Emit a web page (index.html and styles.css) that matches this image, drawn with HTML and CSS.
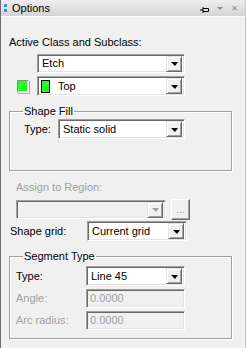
FILE: index.html
```html
<!DOCTYPE html>
<html lang="en">
<head>
    <meta charset="UTF-8">
    <title>Options</title>
    <link rel="stylesheet" href="styles.css">
</head>
<body>
    <div class="panel">

        <div class="titlebar">
            <span class="grip"></span>
            <span class="title">Options</span>
            <span class="tools">
                <svg class="pin" width="9" height="6" viewBox="0 0 9 6"><path d="M0 3H3M3 0V6M3 1.5H8.5V4.5H3" fill="none" stroke="#000" stroke-width="1"/></svg>
                <span class="menu-arrow"></span>
                <span class="close">✕</span>
            </span>
        </div>

        <div class="content">
            <div class="label">Active Class and Subclass:</div>

            <div class="class-rows">
                <div class="combo combo-class">
                    <span class="value">Etch</span>
                    <span class="drop"><i></i></span>
                </div>
                <div class="subclass-row">
                    <span class="swatch-btn"><span></span></span>
                    <div class="combo combo-class">
                        <span class="value"><span class="chip"></span>Top</span>
                        <span class="drop"><i></i></span>
                    </div>
                </div>
            </div>

            <fieldset class="group fill-group">
                <legend>Shape Fill</legend>
                <div class="field fill-field">
                    <span>Type:</span>
                    <div class="combo">
                        <span class="value">Static solid</span>
                        <span class="drop"><i></i></span>
                    </div>
                </div>
            </fieldset>

            <div class="label disabled region-label">Assign to Region:</div>
            <div class="region-row">
                <div class="combo combo-off">
                    <span class="value"></span>
                    <span class="drop"><i></i></span>
                </div>
                <span class="dots">...</span>
            </div>

            <div class="field grid-field">
                <span>Shape grid:</span>
                <div class="combo">
                    <span class="value">Current grid</span>
                    <span class="drop"><i></i></span>
                </div>
            </div>

            <fieldset class="group segment-group">
                <legend>Segment Type</legend>
                <div class="field">
                    <span>Type:</span>
                    <div class="combo">
                        <span class="value">Line 45</span>
                        <span class="drop"><i></i></span>
                    </div>
                </div>
                <div class="field">
                    <span class="disabled">Angle:</span>
                    <div class="textbox">0.0000</div>
                </div>
                <div class="field">
                    <span class="disabled">Arc radius:</span>
                    <div class="textbox">0.0000</div>
                </div>
            </fieldset>
        </div>

    </div>
</body>
</html>
```

FILE: styles.css
```css
:root {
    --face: #f0f0f0;
    --shadow: #a0a0a0;
    --dark: #696969;
    --light: #e3e3e3;
    --gray-text: #a0a0a0;
    --green: #22ff22;
}

body {
    margin: 0;
    font-family: "Liberation Sans", Arial, sans-serif;
    font-size: 11px;
    line-height: 13px;
    color: #000;
    background-color: var(--face);
}

.panel {
    width: 246px;
    height: 348px;
    box-sizing: border-box;
    border-left: 1px solid #6d6d6d;
    border-right: 1px solid #c8c8c8;
    background-color: var(--face);
    overflow: hidden;
}

/* title bar */
.titlebar {
    height: 16px;
    display: flex;
    align-items: center;
    background: linear-gradient(#eeeeee, #d4d4d4);
    border-bottom: 1px solid #f8f8f8;
}

.grip {
    width: 3px;
    height: 8px;
    margin: 0 5px 0 3px;
    background: linear-gradient(#3d8ef0 0 3px, transparent 3px 5px, #3d8ef0 5px);
}

.title {
    flex: 1;
    font-size: 11px;
}

.tools {
    display: flex;
    align-items: center;
    gap: 8px;
    margin-right: 7px;
}

.pin {
    margin-top: 3px;
}

.menu-arrow {
    width: 0;
    height: 0;
    border-left: 3px solid transparent;
    border-right: 3px solid transparent;
    border-top: 3px solid #8a8a8a;
}

.close {
    color: #8a8a8a;
    font-size: 8px;
    font-weight: bold;
    font-family: "DejaVu Sans", sans-serif;
}

/* body */
.content {
    padding: 19px 0 0 8px;
}

.label {
    height: 13px;
}

.disabled {
    color: var(--gray-text);
}

/* sunken controls */
.combo,
.textbox {
    height: 20px;
    box-sizing: border-box;
    border: 1px solid;
    border-color: var(--shadow) #fff #fff var(--shadow);
    box-shadow: inset 1px 1px var(--dark), inset -1px -1px var(--light);
    background-color: #fff;
    display: flex;
    align-items: center;
    padding: 2px;
}

.combo .value {
    flex: 1;
    display: flex;
    align-items: center;
    padding-left: 2px;
    white-space: nowrap;
}

.drop {
    width: 16px;
    height: 16px;
    box-sizing: border-box;
    border: 1px solid;
    border-color: var(--light) var(--dark) var(--dark) var(--light);
    box-shadow: inset 1px 1px #fff, inset -1px -1px var(--shadow);
    background-color: var(--face);
    display: flex;
    align-items: center;
    justify-content: center;
}

.drop i {
    width: 0;
    height: 0;
    border-left: 4px solid transparent;
    border-right: 3px solid transparent;
    border-top: 4px solid #000;
    margin-top: 1px;
}

.combo-off {
    background-color: var(--face);
}

.combo-off .drop i {
    border-top-color: var(--gray-text);
}

.textbox {
    background-color: var(--face);
    color: var(--gray-text);
    padding-left: 3px;
}

/* class / subclass */
.class-rows {
    margin: 5px 0 0 28px;
    display: flex;
    flex-direction: column;
    gap: 3px;
}

.combo-class {
    width: 148px;
}

.class-rows > .combo-class {
    height: 19px;
}

.subclass-row {
    display: flex;
    align-items: center;
    margin-left: -20px;
    gap: 8px;
}

.swatch-btn {
    width: 12px;
    height: 13px;
    box-sizing: border-box;
    border: 1px solid;
    border-color: #8a8a8a #fff #fff #8a8a8a;
    box-shadow: 1px 1px #a8a8a8;
    display: flex;
}

.swatch-btn span {
    flex: 1;
    background-color: var(--green);
    border-right: 1px solid #fff;
    border-bottom: 1px solid #fff;
}

.chip {
    width: 9px;
    height: 13px;
    box-sizing: border-box;
    border: 1px solid #000;
    background-color: var(--green);
    margin: 0 8px 0 -1px;
}

/* group boxes */
.group {
    width: 223px;
    box-sizing: border-box;
    margin: 0;
    padding: 0 0 0 6px;
    border: 1px solid var(--shadow);
    box-shadow: inset 1px 1px #fff, 1px 1px #fff;
}

.group legend {
    padding: 0 1px;
    margin-left: 7px;
    font-size: 11px;
    line-height: 13px;
}

.fill-group {
    margin-top: 9px;
    height: 66px;
}

.field {
    display: grid;
    grid-template-columns: 70px 99px;
    align-items: center;
}

.fill-field {
    grid-template-columns: 34px 127px;
    margin-top: 1px;
    margin-left: 8px;
}

.segment-group {
    margin-top: 9px;
    height: 89px;
}

.segment-group .field {
    margin-bottom: 3px;
}

.segment-group .field:first-of-type {
    margin-top: 3px;
    margin-bottom: 3px;
}

.segment-group .textbox {
    height: 19px;
}

/* region */
.region-label {
    margin-top: 10px;
    margin-left: 7px;
}

.region-row {
    display: flex;
    align-items: center;
    gap: 5px;
    margin: 5px 0 0 7px;
}

.region-row .combo {
    width: 150px;
    height: 19px;
}

.dots {
    width: 19px;
    height: 21px;
    box-sizing: border-box;
    border: 1px solid;
    border-color: #fff var(--dark) var(--dark) #fff;
    box-shadow: inset -1px -1px var(--shadow);
    color: var(--gray-text);
    font-size: 11px;
    line-height: 11px;
    display: flex;
    align-items: center;
    justify-content: center;
}

.grid-field {
    grid-template-columns: 77px 100px;
    margin-top: 1px;
    margin-left: 1px;
}
```
